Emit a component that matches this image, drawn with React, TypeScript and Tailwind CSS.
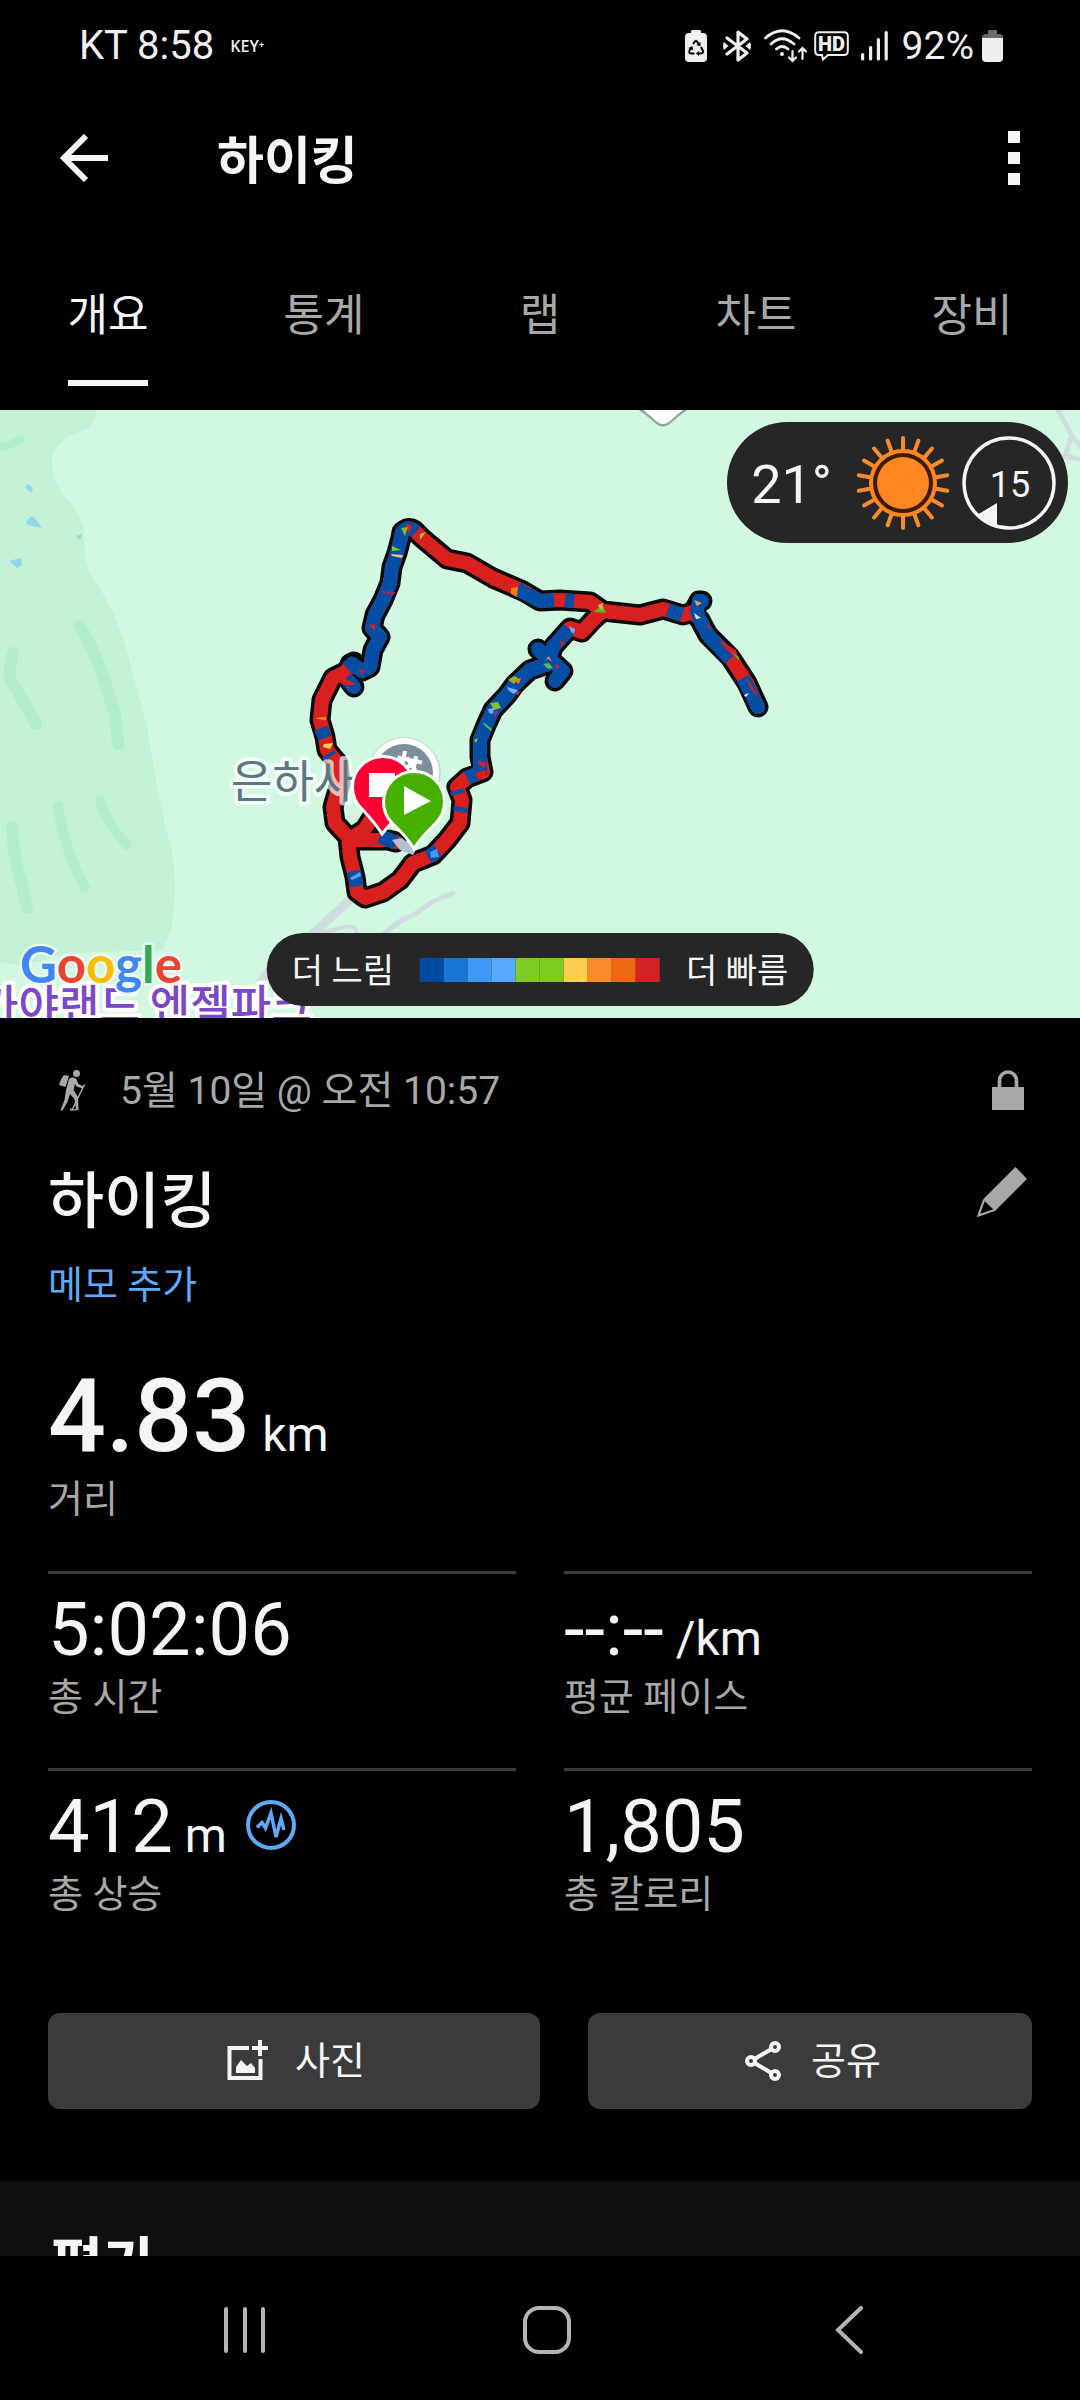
import { useState } from "react"
import clsx from "clsx"

const TABS = ["개요", "통계", "랩", "차트", "장비"]

const PACE_COLORS = [
  "bg-[#004a9f]",
  "bg-[#1976d2]",
  "bg-[#3f97f6]",
  "bg-[#55a9ff]",
  "bg-[#80cb1f]",
  "bg-[#80cb1f]",
  "bg-[#fccd4e]",
  "bg-[#f98c28]",
  "bg-[#ec6a0f]",
  "bg-[#d32222]",
]

const RED = "#d9201f"
const BLUE = "#044ea6"

const TRACK =
  "M758 707L747 683L730 657L708 635L700 620L693 612L683 615L663 609L640 615L603 611L590 602L560 600L540 601L523 591L493 578L467 563L447 559L422 538L414 530Q408 526 402 532L401 538L397 553L392 567L390 583L383 600L375 615L372 628L380 637L373 650L370 667L362 671L352 664L345 672L333 678L322 700L320 720L325 737L327 750L338 763L340 783L333 807L335 823L348 837L350 857L355 877L357 892L365 898L383 892L400 880L413 863L433 855L447 840L460 823L462 800L457 787L467 778L483 772L480 757L480 740L487 723L493 710L507 695L515 684L530 670L548 664L553 647L570 628L582 632L593 620L603 611"

const SPURS = [
  "M693 612L699 601L702 601",
  "M350 664L354 662M344 674L354 687",
  "M548 660L538 649",
  "M553 662L563 671L555 681",
  "M350 839L365 829L373 816M350 840L388 840L396 842",
]

const BLUE_RUNS = [
  "M758 707L743 678M730 659L708 635L700 620L697 612L699 601L702 601",
  "M682 615L668 610M574 601L564 600M554 600L540 601L517 589",
  "M416 532Q408 525 402 532L401 538L397 553L392 567L390 583L383 600L375 615L372 628L380 637L373 650L370 667L362 671L352 664L347 668",
  "M350 664L354 663M346 678L354 687",
  "M321 728L325 738M328 754L330 757",
  "M354 871L357 886M428 857L438 851M460 812L461 807M458 794L457 790M467 778L480 772L480 757L480 740L487 723L493 710L507 695L515 684L530 670L548 664L553 647L569 629",
  "M548 660L538 649M553 662L563 671L555 681",
  "M380 836L396 843",
]

// short patches where the pace jumps for a few samples
const PATCHES: [string, string][] = [
  ["M406 524L409 535L412 525L408 524Z", RED],
  ["M401 528L405 536L408 527Z", "#8ab52c"],
  ["M420 534L426 532L420 540Z", "#9cc43a"],
  ["M392 546L401 550L392 551Z", "#80cb1f"],
  ["M391 554L403 555L402 558L392 556Z", "#eec27a"],
  ["M381 591L396 592L393 595L384 594Z", "#8e2f63"],
  ["M369 625L375 624L375 631Z", RED],
  ["M337 674L346 679L356 684L348 686L340 682Z", RED],
  ["M358 669L366 670L362 675Z", "#a12b50"],
  ["M316 718L326 717L326 720L317 719Z", "#f98c28"],
  ["M324 744L333 743L330 749L323 747Z", "#fccd4e"],
  ["M511 588L518 587L517 597L511 594Z", "#f27a14"],
  ["M559 594L566 594L564 607L558 606Z", RED],
  ["M594 612L602 604L606 613Z", "#63b01f"],
  ["M598 605L603 603L602 611Z", "#d9b36a"],
  ["M694 600L702 603L697 606Z", "#eb9a5e"],
  ["M694 613L701 618L696 619Z", "#e8e4c4"],
  ["M709 625L711 631L706 625Z", RED],
  ["M718 640L736 650L739 661L728 651Z", RED],
  ["M732 652L739 657L739 661Z", "#80a81f"],
  ["M746 676L752 686L760 700L750 688Z", RED],
  ["M744 695L749 693L746 697Z", "#e5efff"],
  ["M569 626L575 629L574 634L571 632Z", "#6fa8f5"],
  ["M560 640L565 643L561 646Z", RED],
  ["M545 660L549 656L552 662L548 659Z", "#ef7c55"],
  ["M543 664L549 663L553 668L548 669Z", "#4fbe5a"],
  ["M555 664L560 667L556 669Z", RED],
  ["M508 680L514 676L518 678L514 684Z", "#8fb82a"],
  ["M513 680L521 678L519 684Z", "#f27a14"],
  ["M507 687L518 690L514 694L509 691Z", "#74b0fb"],
  ["M516 692L521 691L517 696Z", "#c22b4f"],
  ["M490 703L498 702L501 708L494 710Z", "#80c41f"],
  ["M488 709L494 708L493 714L489 713Z", "#6aabff"],
  ["M494 712L498 711L495 718Z", "#c22b4f"],
  ["M483 722L492 729L491 731L484 725Z", "#4fbe5a"],
  ["M474 740L478 738L476 743Z", "#a8c42a"],
  ["M478 760L487 763L484 768L478 764Z", "#b92b4a"],
  ["M475 773L486 770L486 778L478 779Z", RED],
  ["M430 852L437 849L439 857L431 858Z", "#4c97f0"],
  ["M350 878L360 872L361 876L352 880Z", "#5a9cef"],
]

const ICON_GRAY = "#a8a8a8"

function StatusBar() {
  return (
    <div className="flex h-[92px] items-center justify-between pl-[79px] pr-[77px] text-[#efefef]">
      <div className="flex items-center gap-4">
        <span className="text-[40px]">KT 8:58</span>
        <span className="font-['Open_Sans'] text-base font-semibold">KEY⁺</span>
      </div>
      <div className="flex items-center">
        <svg width="22" height="32" viewBox="0 0 22 32" aria-hidden="true">
          <path d="M6 3V1.500Q6 0 7.500 0H14.500Q16 0 16 1.500V3H18Q22 3 22 7V28Q22 32 18 32H4Q0 32 0 28V7Q0 3 4 3Z" fill="#efefef" />
          <path d="M8 14L10 11.500Q11 10.500 12 11.500L14 14.500M16 17L18 21Q18 23.500 16 23.500H13M9.500 23.500H5.500Q3.500 23 4.500 20.500L6 17.500" fill="none" stroke="#000" strokeWidth="2" />
          <path d="M15.500 12V16.500L11.500 15ZM14 21V26L11 23.500ZM3.500 18L7.500 16L8 20.500Z" fill="#000" />
        </svg>
        <svg className="ml-4" width="28" height="32" viewBox="0 0 28 32" aria-hidden="true">
          <path d="M4 8L24 23L15 30V2L24 9L4 24" fill="none" stroke="#efefef" strokeWidth="3.200" strokeLinejoin="round" strokeLinecap="round" />
          <path d="M1 12L5.500 16L1 20Q-1 16 1 12ZM27 12L22.500 16L27 20Q29 16 27 12Z" fill="#efefef" />
        </svg>
        <svg className="ml-3" width="45" height="34" viewBox="0 0 45 34" fill="none" stroke="#efefef" strokeWidth="2.800" strokeLinecap="round" aria-hidden="true">
          <path d="M2.500 9Q19 -5.500 36 9M8 15Q19 4.500 31 15M13.500 20Q19 15 25 20" />
          <circle cx="19" cy="25" r="2" fill="#efefef" stroke="none" />
          <path d="M29.500 22V32M26 28.500L29.500 32L33 28.500M39.500 30V19M36 22.500L39.500 19L43 22.500" strokeWidth="2.200" />
        </svg>
        <svg className="ml-1.5" width="35" height="30" viewBox="0 0 35 30" aria-hidden="true">
          <path d="M5 1.200H30Q33.800 1.200 33.800 5V20Q33.800 24 30 24H14L9 28.500L8 24H5Q1.200 24 1.200 20V5Q1.200 1.200 5 1.200Z" fill="none" stroke="#efefef" strokeWidth="2" />
          <text x="17.500" y="20" textAnchor="middle" fontSize="20" fontWeight="900" fill="#efefef">HD</text>
        </svg>
        <svg className="ml-3" width="27" height="30" viewBox="0 0 27 30" fill="#efefef" aria-hidden="true">
          <rect x="0" y="22" width="3.200" height="7.500" rx="1.500" />
          <rect x="8" y="15" width="3.200" height="14.500" rx="1.500" />
          <rect x="15.800" y="7" width="3.200" height="22.500" rx="1.500" />
          <rect x="23.600" y="0" width="3.200" height="29.500" rx="1.500" />
        </svg>
        <span className="ml-3.5 text-[39px]">92%</span>
        <svg className="ml-2" width="21" height="32" viewBox="0 0 21 32" aria-hidden="true">
          <path d="M6 4V1Q6 0 7 0H14Q15 0 15 1V4H17Q21 4 21 8V9H0V8Q0 4 4 4Z" fill="#6b6b6b" />
          <path d="M0 8H21V28Q21 32 17 32H4Q0 32 0 28Z" fill="#efefef" />
        </svg>
      </div>
    </div>
  )
}

function TopBar() {
  return (
    <header className="flex h-[132px] items-center pl-[60px] pr-[50px] text-[#f5f5f5]">
      <button type="button" aria-label="뒤로">
        <svg width="48" height="48" viewBox="0 0 48 48" fill="none" stroke="currentColor" strokeWidth="6" aria-hidden="true">
          <path d="M48 24H5M26 2L4 24L26 46" />
        </svg>
      </button>
      <h1 className="ml-[109px] flex-1 pt-2 text-[51px] font-bold">하이킹</h1>
      <button type="button" aria-label="더보기" className="flex flex-col gap-[9px] px-2.5">
        <span className="size-3 bg-[#f5f5f5]" />
        <span className="size-3 bg-[#f5f5f5]" />
        <span className="size-3 bg-[#f5f5f5]" />
      </button>
    </header>
  )
}

function WeatherPill() {
  const rays = Array.from({ length: 18 }, (_, i) => i * 20)
  return (
    <div className="absolute right-3 top-3 flex h-[121px] items-center rounded-full bg-[#262626] pl-6 pr-3 text-[#f5f5f5]">
      <span className="whitespace-nowrap pt-1 text-[54px]">21°</span>
      <svg className="ml-6" width="94" height="96" viewBox="-47 -48 94 96" aria-hidden="true">
        {rays.map((a) => (
          <path key={a} d="M0 -32V-45" stroke="#f98c28" strokeWidth="4" strokeLinecap="round" transform={`rotate(${a})`} />
        ))}
        <circle r="32" fill="#3a1d04" stroke="#ff8620" strokeWidth="4" />
        <circle r="26" fill="#ff8620" />
      </svg>
      <div className="relative ml-3 flex size-[94px] items-center justify-center">
        <svg className="absolute inset-0" width="94" height="94" viewBox="0 0 94 94" aria-hidden="true">
          <circle cx="47" cy="47" r="45" fill="none" stroke="#f5f5f5" strokeWidth="3.500" />
          <path d="M15 79L35 67V91Q24 88 15 79Z" fill="#f5f5f5" />
        </svg>
        <span className="relative pl-0.5 pt-1 text-4xl">15</span>
      </div>
    </div>
  )
}

function PaceLegend() {
  return (
    <div className="absolute bottom-3 left-1/2 flex h-[73px] -translate-x-1/2 items-center gap-[26px] whitespace-nowrap rounded-full bg-[#262626] px-[25px] text-[34px] text-[#f5f5f5]">
      <span className="pt-1">더 느림</span>
      <div className="flex">
        {PACE_COLORS.map((c, i) => (
          <span key={i} className={clsx("size-6", c)} />
        ))}
      </div>
      <span className="pt-1">더 빠름</span>
    </div>
  )
}

function RouteMap() {
  return (
    <section className="relative h-[608px] overflow-hidden bg-[#d2f8e1]" aria-label="경로">
      <svg className="h-full w-full" viewBox="0 410 1080 608" preserveAspectRatio="xMidYMid slice">
        {/* terrain */}
        <path d="M0 410H96Q96 424 84 430Q52 440 52 463Q52 482 65 497Q82 514 84 534Q84 556 89 572Q116 610 128 655L148 732Q152 762 163 815L173 855Q180 920 162 950L67 953L20 966L0 962Z" fill="#c3f1d5" />
        <g fill="none" stroke="#b1edc9" strokeWidth="12" strokeLinecap="round" strokeLinejoin="round">
          <path d="M-4 448Q10 446 21 439" strokeWidth="8" />
          <path d="M79 626Q96 648 115 715L118 744" />
          <path d="M13 653Q6 680 16 688L36 724" />
          <path d="M12 827Q14 862 22 885L27 908" />
          <path d="M58 806Q64 850 85 887" strokeWidth="10" />
          <path d="M100 801Q108 826 127 845" strokeWidth="10" />
        </g>
        <path d="M25 487L28 484L33 488L31 493ZM26 522L31 516L35 518L42 528L28 525ZM76 536L82 534L80 540ZM9 561L21 558L22 565L17 568Z" fill="#93d5ea" />
        {/* roads */}
        <g fill="none" stroke="#cfdde0" strokeLinecap="round">
          <path d="M352 898L310 936Q268 960 246 1010" strokeWidth="9" />
          <path d="M453 893L432 902L415 914L402 920L378 938" strokeWidth="5" />
          <path d="M316 934L345 927Q358 924 357 936" strokeWidth="4" />
          <path d="M1057 408L1072 436L1082 448M1071 438L1065 456L1082 460" strokeWidth="5" />
        </g>
        {/* recorded track */}
        <g fill="none" strokeLinejoin="round" strokeLinecap="round">
          <path d="M400 843L414 852" stroke="#111" strokeWidth="5" />
          <path d={TRACK} stroke="#0b0b0b" strokeWidth="21" />
          {SPURS.map((d) => (
            <path key={d} d={d} stroke="#0b0b0b" strokeWidth="21" />
          ))}
          <path d={TRACK} stroke={RED} strokeWidth="14" />
          <path d={SPURS[4]} stroke={RED} strokeWidth="14" />
          {BLUE_RUNS.map((d) => (
            <path key={d} d={d} stroke={BLUE} strokeWidth="14" strokeLinecap="butt" />
          ))}
          <g stroke={BLUE} strokeWidth="14">
            <path d="M757 705L758 707M699 601L702 601M351 684L354 687M542 653L538 649M560 673L555 681" />
          </g>
        </g>
        {PATCHES.map(([d, fill]) => (
          <path key={d} d={d} fill={fill} />
        ))}
        <path d="M392 840L402 838L416 850L413 855L400 850Z" fill="#b5bfd2" />

        {/* places */}
        <path d="M636 408H690Q680 415 672 422Q663 431 654 422Q646 415 636 408Z" fill="#8fa69b" />
        <path d="M638 406H688Q680 412 671 420Q663 428 655 420Q646 412 638 406Z" fill="#fff" />
        <circle cx="404" cy="774" r="37" fill="#9fb5ab" opacity="0.35" />
        <circle cx="404" cy="773" r="35" fill="#fff" />
        <circle cx="404" cy="773" r="29" fill="#7b909b" />
        <g stroke="#fff" strokeWidth="4" fill="none" transform="translate(409 766) rotate(12)">
          <path d="M-7 -14V8M-13 -6H12M5 -11V10M-4 -8L8 4M8 -8L-4 4" />
        </g>
        <g fontFamily="'Noto Sans CJK KR', sans-serif" paintOrder="stroke" strokeLinejoin="round" stroke="#fff" strokeWidth="8">
          <text x="231" y="798" fontSize="45" fill="#5d7482" strokeOpacity="0.7">은하사</text>
          <text x="-22" y="1022" fontSize="44" fill="#7b48c8" fontWeight="500">가야랜드 엔젤파크</text>
        </g>
        <text x="20" y="983" fontFamily="Lato, sans-serif" fontSize="51" fontWeight="700" paintOrder="stroke" stroke="#eafaf1" strokeWidth="5" strokeLinejoin="round">
          <tspan fill="#4285f4">G</tspan>
          <tspan fill="#ea4335">o</tspan>
          <tspan fill="#fbbc05">o</tspan>
          <tspan fill="#4285f4">g</tspan>
          <tspan fill="#34a853">l</tspan>
          <tspan fill="#ea4335">e</tspan>
        </text>

        {/* finish and start pins */}
        <path d="M382 834Q376 824 362 809A30.500 30.500 0 1 1 404 809Q390 824 382 834Z" fill="#ff0033" stroke="#fff" strokeWidth="3" />
        <rect x="369" y="773" width="26" height="24" fill="#fff" />
        <path d="M414 849Q408 838 392 823A30.500 30.500 0 1 1 436 823Q420 838 414 849Z" fill="#45b000" stroke="#fff" strokeWidth="3" />
        <path d="M404 786V815L431 801Z" fill="#fff" />
      </svg>
      <WeatherPill />
      <PaceLegend />
    </section>
  )
}

function Stat({ value, unit, label, badge }: { value: string; unit?: string; label: string; badge?: boolean }) {
  return (
    <div className="h-[197px] border-t-[3px] border-[#3b3b3b] pt-3.5">
      <dd className="flex items-baseline gap-3 text-[74px] leading-[84px] text-[#f5f5f5]">
        {value}
        {unit && <span className="text-5xl">{unit}</span>}
        {badge && (
          <svg className="ml-1.5 mt-3.5 self-start" width="52" height="52" viewBox="0 0 52 52" fill="none" stroke="#60a8f8" strokeWidth="4" aria-hidden="true">
            <circle cx="26" cy="26" r="23" />
            <path d="M12 28.500L17 23.500L20.500 29L26 14L31 38L36 19.500L39 31" strokeWidth="3.500" />
          </svg>
        )}
      </dd>
      <dt className="text-[38px] leading-[50px] text-[#a8a8a8]">{label}</dt>
    </div>
  )
}

function Summary() {
  return (
    <section className="px-12 pb-[72px] pt-12">
      <div className="flex h-12 items-center gap-6">
        <svg width="48" height="48" viewBox="0 0 48 48" fill={ICON_GRAY} aria-hidden="true">
          <circle cx="28.500" cy="7.500" r="3.500" />
          <path d="M16 9L21 10L17.500 21L11 19Q13 12 16 9Z" />
          <path d="M21 13Q24 10.500 28 12.500L30.500 18L35.500 20.500L34.500 22.500L28.500 20.500L27 18L25.500 24L30 31L30.500 44H28L26.500 33L22 28L19.500 36L14.500 44.500H12.500L16.500 34L18 24Z" />
          <path d="M36.500 18.500L24 44" stroke={ICON_GRAY} strokeWidth="1.500" />
          <path d="M22 42.500L29 43.500V44.500H22Z" />
        </svg>
        <p className="flex-1 pt-0.5 text-[39px] text-[#a8a8a8]">5월 10일 @ 오전 10:57</p>
        <svg width="48" height="48" viewBox="0 0 48 48" aria-label="비공개">
          <rect x="8" y="21" width="32" height="23" fill={ICON_GRAY} />
          <path d="M15.500 22V14.500A8.500 8.500 0 0 1 32.500 14.500V22" fill="none" stroke={ICON_GRAY} strokeWidth="3.600" />
        </svg>
      </div>

      <div className="mt-9 flex h-[84px] items-center justify-between">
        <h2 className="pt-5 text-[61px] font-medium text-[#f5f5f5]">하이킹</h2>
        <button type="button" aria-label="이름 편집">
          <svg width="60" height="60" viewBox="0 0 60 60" fill={ICON_GRAY} aria-hidden="true">
            <path d="M43.500 5L55 17L23 49L11 37.500Z" />
            <path d="M12 38L6.500 53.500L22.500 48" fill="none" stroke={ICON_GRAY} strokeWidth="2.200" />
          </svg>
        </button>
      </div>

      <a href="#memo" className="mt-[26px] block w-fit text-[38px] leading-[50px] text-[#5fa9f8]">메모 추가</a>

      <dl>
        <div className="mt-[51px] h-[210px]">
          <dd className="flex items-baseline gap-3 text-[102px] font-medium leading-[110px] text-[#f5f5f5]">
            4.83
            <span className="text-5xl font-normal">km</span>
          </dd>
          <dt className="mt-1 text-[38px] leading-[48px] text-[#a8a8a8]">거리</dt>
        </div>
        <div className="grid grid-cols-2 gap-x-12">
          <Stat value="5:02:06" label="총 시간" />
          <Stat value="--:--" unit="/km" label="평균 페이스" />
          <Stat value="412" unit="m" label="총 상승" badge />
          <Stat value="1,805" label="총 칼로리" />
        </div>
      </dl>

      <div className="mt-12 grid grid-cols-[41fr_37fr] gap-12 text-[38px] text-[#f5f5f5]">
        <button type="button" className="flex h-24 items-center justify-center gap-6 rounded-xl bg-[#3b3b3b]">
          <svg width="48" height="48" viewBox="0 0 48 48" fill="none" stroke="currentColor" strokeWidth="4" aria-hidden="true">
            <path d="M26 11H6.500V41H37.500V22M37 3V19M29 11H45" />
            <path d="M13 36V30L18 23L24 29L28 26L32 31V36Z" fill="currentColor" stroke="none" />
          </svg>
          <span className="pt-0.5">사진</span>
        </button>
        <button type="button" className="flex h-24 items-center justify-center gap-6 rounded-xl bg-[#3b3b3b]">
          <svg width="48" height="48" viewBox="0 0 48 48" fill="none" stroke="currentColor" strokeWidth="4" aria-hidden="true">
            <circle cx="12" cy="24" r="4" />
            <circle cx="36" cy="10" r="4" />
            <circle cx="36" cy="38" r="4" />
            <path d="M15.500 22L32.500 12M15.500 26L32.500 36" />
          </svg>
          <span className="pt-0.5">공유</span>
        </button>
      </div>
    </section>
  )
}

function SystemNav() {
  return (
    <nav className="grid h-36 shrink-0 grid-cols-3 pl-[94px] pr-20 pt-1 text-[#b4b4b4]">
      <button type="button" aria-label="최근 앱" className="flex items-center justify-center">
        <svg width="48" height="48" viewBox="0 0 48 48" stroke="currentColor" strokeWidth="4" strokeLinecap="round" aria-hidden="true">
          <path d="M5 3V45M24 3V45M42 3V45" />
        </svg>
      </button>
      <button type="button" aria-label="홈" className="flex items-center justify-center">
        <span className="size-12 rounded-2xl border-4 border-[#b4b4b4]" />
      </button>
      <button type="button" aria-label="뒤로" className="flex items-center justify-center">
        <svg width="48" height="48" viewBox="0 0 48 48" fill="none" stroke="currentColor" strokeWidth="4" strokeLinecap="round" aria-hidden="true">
          <path d="M36 2L13 24L36 46" />
        </svg>
      </button>
    </nav>
  )
}

export default function App() {
  const [active, setActive] = useState(TABS[0])

  return (
    <div className="flex h-screen flex-col bg-black font-['Roboto','Noto_Sans_CJK_KR',sans-serif] leading-tight">
      <StatusBar />
      <TopBar />
      <nav className="grid grid-cols-5 pb-6 pt-[60px]">
        {TABS.map((tab) => (
          <button key={tab} type="button" onClick={() => setActive(tab)} className="flex justify-center">
            <span
              className={clsx(
                "border-b-[6px] pb-8 text-[44px] leading-[64px]",
                tab === active ? "border-[#f5f5f5] text-[#f5f5f5]" : "border-transparent text-[#a8a8a8]"
              )}
            >
              {tab}
            </span>
          </button>
        ))}
      </nav>

      <main className="min-h-0 flex-1 overflow-hidden">
        <RouteMap />
        <Summary />
        <section className="bg-[#0f0f0f] px-[50px] py-12">
          <h2 className="text-[58px] font-bold leading-[72px] text-[#f5f5f5]">평가</h2>
        </section>
      </main>

      <SystemNav />
    </div>
  )
}
